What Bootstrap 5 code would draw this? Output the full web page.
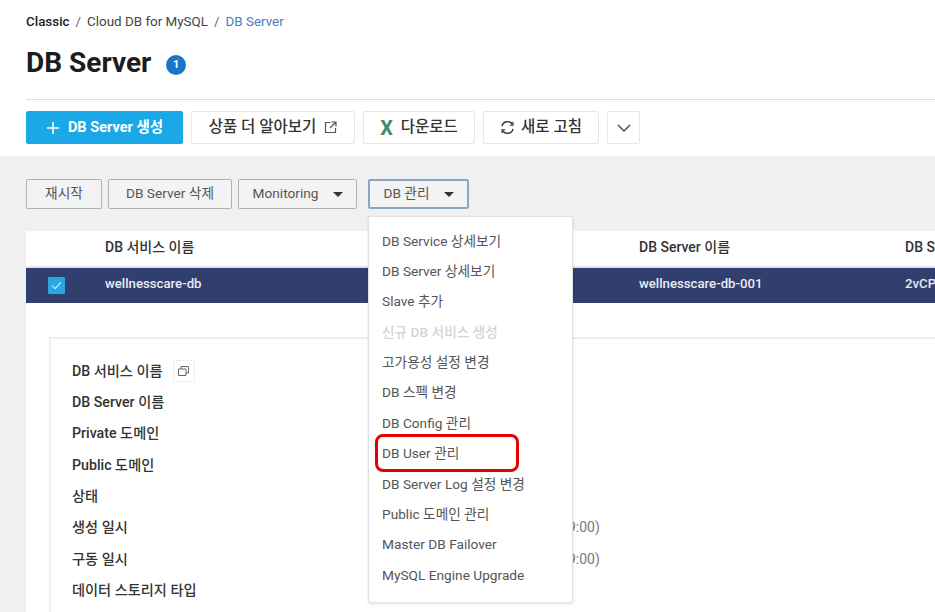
<!DOCTYPE html>
<html lang="ko">

<head>
    <meta charset="UTF-8">
    <meta name="viewport" content="width=device-width, initial-scale=1.0">
    <title>DB Server</title>
    <link href="https://cdn.jsdelivr.net/npm/bootstrap@5.3.2/dist/css/bootstrap.min.css" rel="stylesheet">
    <style>
        html,
        body {
            height: 612px;
            overflow: hidden;
        }

        body {
            font-family: Roboto, "Noto Sans CJK KR", sans-serif;
            font-size: 14px;
            color: #333;
            background: #f0f0f0;
        }

        /* top white header */
        .page-head {
            height: 156px;
            padding: 13px 0 0 26px;
            background: #fff;
        }

        .page-head .breadcrumb {
            margin: 0;
            height: 17px;
            line-height: 17px;
            font-size: 13.4px;
            --bs-breadcrumb-item-padding-x: 6px;
            --bs-breadcrumb-divider-color: #666;
        }

        .page-head .breadcrumb-item {
            color: #444;
        }

        .page-head .breadcrumb-item.first-crumb {
            color: #222;
            font-weight: 500;
        }

        .page-head .breadcrumb-item.active {
            color: #4a7cb5;
        }

        .page-title {
            margin: 17px 0 0;
            height: 32px;
            line-height: 32px;
            font-size: 28px;
            font-weight: 700;
            color: #1c1c1c;
        }

        .title-count {
            width: 20px;
            height: 20px;
            padding: 0;
            margin-left: 8px;
            line-height: 20px;
            font-size: 11px;
            background: #1b75c9;
            vertical-align: 4px;
        }

        .head-rule {
            height: 1px;
            margin-top: 20px;
            background: #ddd;
        }

        .head-actions {
            margin-top: 11px;
        }

        .btn-head {
            height: 33px;
            padding: 0;
            font-size: 15.5px;
            font-weight: 500;
            color: #333;
            background: #fff;
            border: 1px solid #e6e6e6;
            border-radius: 2px;
        }

        .btn-create {
            width: 157px;
            font-size: 14.5px;
            font-weight: 700;
            color: #fff;
            background: #1ba8e6;
            border-color: #1ba8e6;
        }

        .btn-more-info {
            width: 164px;
        }

        .btn-download {
            width: 112px;
            gap: 8px;
        }

        .btn-reload {
            width: 116px;
            gap: 6px;
        }

        .btn-chevron {
            width: 33px;
        }

        .excel-x {
            font-size: 20px;
            font-weight: 700;
            color: #3f8f5f;
            line-height: 1;
        }

        /* gray work area */
        .work-area {
            padding: 23px 0 0 26px;
        }

        .tool-row {
            height: 30px;
            margin-bottom: 22px;
        }

        .btn-tool {
            height: 30px;
            padding: 0 0 2px;
            font-size: 13.7px;
            color: #555;
            background: #f3f3f3;
            border: 1px solid #adb3b8;
            border-radius: 2px;
        }

        .btn-tool.dropdown-toggle::after {
            margin-left: 14px;
            vertical-align: 1px;
            color: #333;
            border-top-width: 5px;
            border-left-width: 5px;
            border-right-width: 5px;
        }

        .btn-tool.is-open {
            border: 2px solid #8aa5c5;
        }

        .btn-restart {
            width: 76px;
        }

        .btn-remove {
            width: 124px;
            margin-left: 6px;
        }

        .btn-monitor {
            width: 119px;
            margin-left: 6px;
        }

        .btn-manage {
            width: 101px;
        }

        .manage-wrap {
            margin-left: 11px;
        }

        .tool-menu {
            top: 37px;
            left: 0;
            width: 205px;
            height: 387px;
            padding: 8.5px 0 0;
            font-size: 13.7px;
            border: 1px solid #e2e2e2;
            border-radius: 2px;
            box-shadow: 0 1px 3px rgba(0, 0, 0, .12);
        }

        .tool-menu .dropdown-item {
            height: 30.4px;
            padding: 0 13px;
            line-height: 30px;
            color: #555;
        }

        .tool-menu .dropdown-item.disabled {
            color: #d4d4d4;
            font-weight: 500;
        }

        .picked-item {
            position: relative;
        }

        .picked-item::after {
            content: "";
            position: absolute;
            left: 6px;
            top: -4px;
            width: 144px;
            height: 38px;
            border: 3px solid #e60000;
            border-radius: 8px;
        }

        .server-table {
            table-layout: fixed;
            width: 909px;
            margin: 0;
            background: #fff;
        }

        .col-check {
            width: 79px;
        }

        .col-service {
            width: 534px;
        }

        .col-server {
            width: 266px;
        }

        .col-type {
            width: 30px;
        }

        .server-table th,
        .server-table td {
            height: 36px;
            padding: 0 0 3px;
            overflow: hidden;
            white-space: nowrap;
            vertical-align: middle;
            border: 0;
        }

        .server-table th {
            font-weight: 500;
            color: #333;
            background: #fff;
            border-bottom: 2px solid #dfe4ec;
        }

        .server-table .row-picked td {
            font-size: 13.2px;
            font-weight: 500;
            color: #e8ebf3;
            background: #303f6e;
        }

        .server-table .form-check-input {
            display: block;
            width: 17px;
            height: 17px;
            margin: 3px 0 0 22px;
            background-color: #2aa6e4;
            border-color: #2aa6e4;
            border-radius: 1px;
            background-image: url("data:image/svg+xml,%3csvg xmlns='http://www.w3.org/2000/svg' viewBox='0 0 17 17'%3e%3cpath fill='none' stroke='%23e6f4fb' stroke-width='1.2' d='M3.5 8.5l3.5 3.5 6.5-7'/%3e%3c/svg%3e");
        }

        .detail-wrap {
            height: 320px;
            padding: 34px 0 0 23px;
            background: #fff;
        }

        .detail-box {
            height: 300px;
            padding: 16.5px 0 0 21px;
            border: solid #eee;
            border-width: 2px 0 0 2px;
        }

        .detail-line {
            height: 31.4px;
            line-height: 31px;
        }

        .detail-label {
            width: 449px;
            font-size: 14.2px;
            font-weight: 500;
            color: #333;
        }

        .detail-value {
            color: #777;
        }

        .btn-copy {
            width: 22px;
            height: 22px;
            padding: 0;
            margin-left: 10px;
            line-height: 1;
            background: #fff;
            border: 1px solid #eee;
            border-radius: 2px;
        }
    </style>
</head>

<body>

    <!-- header -->
    <div class="page-head">
        <nav aria-label="breadcrumb">
            <ol class="breadcrumb">
                <li class="breadcrumb-item first-crumb">Classic</li>
                <li class="breadcrumb-item">Cloud DB for MySQL</li>
                <li class="breadcrumb-item active" aria-current="page">DB Server</li>
            </ol>
        </nav>
        <h1 class="page-title">DB Server <span class="badge rounded-pill title-count">1</span></h1>
        <div class="head-rule"></div>
        <div class="head-actions d-flex gap-2">
            <button class="btn btn-head btn-create d-flex align-items-center justify-content-center gap-2">
                <svg width="14" height="14" viewBox="0 0 14 14"><path d="M7 1v12M1 7h12" stroke="#fff" stroke-width="1.6" fill="none"/></svg>
                DB Server 생성
            </button>
            <button class="btn btn-head btn-more-info d-flex align-items-center justify-content-center gap-2">
                상품 더 알아보기
                <svg width="13" height="13" viewBox="0 0 13 13" fill="none" stroke="#555" stroke-width="1.2"><path d="M6 1.5H1.5v10h10V7M7.5 1h4.5v4.5M12 1 6 7"/></svg>
            </button>
            <button class="btn btn-head btn-download d-flex align-items-center justify-content-center">
                <span class="excel-x">X</span> 다운로드
            </button>
            <button class="btn btn-head btn-reload d-flex align-items-center justify-content-center">
                <svg width="15" height="15" viewBox="0 0 15 15" fill="none" stroke="#333" stroke-width="1.3"><path d="M2 6.2A5.6 5.6 0 0 1 12.4 4.6M13 8.8A5.6 5.6 0 0 1 2.6 10.4"/><path d="M13 1.8v3.4H9.8M2 13.2V9.8h3.2" stroke-width="1.1"/></svg>
                새로 고침
            </button>
            <button class="btn btn-head btn-chevron d-flex align-items-center justify-content-center" aria-label="더보기">
                <svg width="14" height="8" viewBox="0 0 14 8" fill="none" stroke="#444" stroke-width="1.3"><path d="M1 1l6 6 6-6"/></svg>
            </button>
        </div>
    </div>

    <div class="work-area">
        <!-- toolbar -->
        <div class="tool-row d-flex">
            <button class="btn btn-tool btn-restart">재시작</button>
            <button class="btn btn-tool btn-remove">DB Server 삭제</button>
            <button class="btn btn-tool btn-monitor dropdown-toggle">Monitoring</button>
            <div class="dropdown manage-wrap">
                <button class="btn btn-tool btn-manage is-open dropdown-toggle">DB 관리</button>
                <ul class="dropdown-menu show tool-menu">
                    <li><a class="dropdown-item" href="#">DB Service 상세보기</a></li>
                    <li><a class="dropdown-item" href="#">DB Server 상세보기</a></li>
                    <li><a class="dropdown-item" href="#">Slave 추가</a></li>
                    <li><a class="dropdown-item disabled" href="#">신규 DB 서비스 생성</a></li>
                    <li><a class="dropdown-item" href="#">고가용성 설정 변경</a></li>
                    <li><a class="dropdown-item" href="#">DB 스펙 변경</a></li>
                    <li><a class="dropdown-item" href="#">DB Config 관리</a></li>
                    <li><a class="dropdown-item picked-item" href="#">DB User 관리</a></li>
                    <li><a class="dropdown-item" href="#">DB Server Log 설정 변경</a></li>
                    <li><a class="dropdown-item" href="#">Public 도메인 관리</a></li>
                    <li><a class="dropdown-item" href="#">Master DB Failover</a></li>
                    <li><a class="dropdown-item" href="#">MySQL Engine Upgrade</a></li>
                </ul>
            </div>
        </div>

        <!-- list -->
        <table class="table server-table">
            <colgroup>
                <col class="col-check">
                <col class="col-service">
                <col class="col-server">
                <col class="col-type">
            </colgroup>
            <thead>
                <tr>
                    <th></th>
                    <th>DB 서비스 이름</th>
                    <th>DB Server 이름</th>
                    <th>DB Server 타입</th>
                </tr>
            </thead>
            <tbody>
                <tr class="row-picked">
                    <td><input class="form-check-input" type="checkbox" checked aria-label="선택"></td>
                    <td>wellnesscare-db</td>
                    <td>wellnesscare-db-001</td>
                    <td>2vCPU</td>
                </tr>
            </tbody>
        </table>

        <!-- detail -->
        <div class="detail-wrap">
            <div class="detail-box">
                <div class="detail-line d-flex align-items-center">
                    <span class="detail-label d-flex align-items-center">DB 서비스 이름
                        <button class="btn btn-copy d-flex align-items-center justify-content-center" aria-label="복사">
                            <svg width="11" height="10" viewBox="0 0 11 10" fill="none" stroke="#666" stroke-width="1"><path d="M.5 3h7.5v6.5H.5zM3 3V.5h7.5V7H8"/></svg>
                        </button>
                    </span>
                </div>
                <div class="detail-line"><span class="detail-label d-block">DB Server 이름</span></div>
                <div class="detail-line"><span class="detail-label d-block">Private 도메인</span></div>
                <div class="detail-line"><span class="detail-label d-block">Public 도메인</span></div>
                <div class="detail-line"><span class="detail-label d-block">상태</span></div>
                <div class="detail-line d-flex"><span class="detail-label">생성 일시</span><span class="detail-value">(UTC+09:00)</span></div>
                <div class="detail-line d-flex"><span class="detail-label">구동 일시</span><span class="detail-value">(UTC+09:00)</span></div>
                <div class="detail-line"><span class="detail-label d-block">데이터 스토리지 타입</span></div>
            </div>
        </div>
    </div>

    <script src="https://cdn.jsdelivr.net/npm/bootstrap@5.3.2/dist/js/bootstrap.bundle.min.js"></script>
</body>

</html>
